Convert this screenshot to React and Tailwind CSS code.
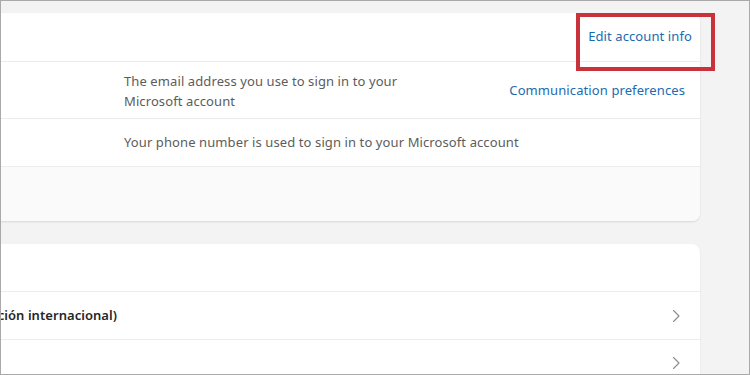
import React from "react";

function Chevron() {
  return (
    <svg width="10" height="14" viewBox="0 0 10 14" fill="none" className="shrink-0">
      <path d="M2.5 1.5 L8 7 L2.5 12.5" stroke="#8a8a8a" strokeWidth="1.1" strokeLinecap="round" strokeLinejoin="round" />
    </svg>
  );
}

export default function App() {
  const font = { fontFamily: '"Noto Sans", "Open Sans", sans-serif' };
  return (
    <div className="relative w-[750px] h-[375px] overflow-hidden bg-[#f3f3f3] border border-[#a9a9a9]" style={font}>
      <div className="flex flex-col pt-[12px] pr-[49px] gap-[23px]">
        {/* Card 1 */}
        <div className="bg-white rounded-r-[8px] shadow-[0_1px_2px_rgba(0,0,0,0.12)] overflow-hidden">
          <div className="h-[49px] flex items-center justify-end pr-[8px] border-b border-[#ececec]">
            <span className="text-[13px] text-[#1b6bb0] tracking-[0.1px]">Edit account info</span>
          </div>
          <div className="h-[57px] flex items-center border-b border-[#ececec] pr-[15px]">
            <div className="w-[123px] shrink-0" />
            <div className="flex-1 text-[13px] leading-[20px] text-[#5c5c5c] tracking-[0.1px] pt-[1px]">
              The email address you use to sign in to your
              <br />
              Microsoft account
            </div>
            <span className="text-[13px] text-[#1b6bb0] tracking-[0.1px] mt-[1px]">Communication preferences</span>
          </div>
          <div className="h-[48px] flex items-center border-b border-[#ececec]">
            <div className="w-[123px] shrink-0" />
            <div className="text-[13px] text-[#5c5c5c] tracking-[0.1px] pt-[1px]">
              Your phone number is used to sign in to your Microsoft account
            </div>
          </div>
          <div className="h-[54px] bg-[#fafafa]" />
        </div>

        {/* Card 2 */}
        <div className="bg-white rounded-tr-[8px] shadow-[0_1px_2px_rgba(0,0,0,0.10)] h-[140px]">
          <div className="h-[48px] border-b border-[#ececec]" />
          <div className="h-[48px] flex items-center justify-between border-b border-[#ececec] pr-[19px]">
            <div className="w-[116px] flex justify-end whitespace-nowrap pt-[1px]">
              <span className="text-[13px] font-semibold text-[#262626] tracking-[0.05px]">
                Español (España, alfabetización internacional)
              </span>
            </div>
            <Chevron />
          </div>
          <div className="h-[46px] flex items-center justify-end pr-[19px]">
            <Chevron />
          </div>
        </div>
      </div>

      {/* annotation box */}
      <div className="absolute left-[575px] top-[12px] w-[139px] h-[58px] border-[4px] border-[#c8323a]" />
    </div>
  );
}
